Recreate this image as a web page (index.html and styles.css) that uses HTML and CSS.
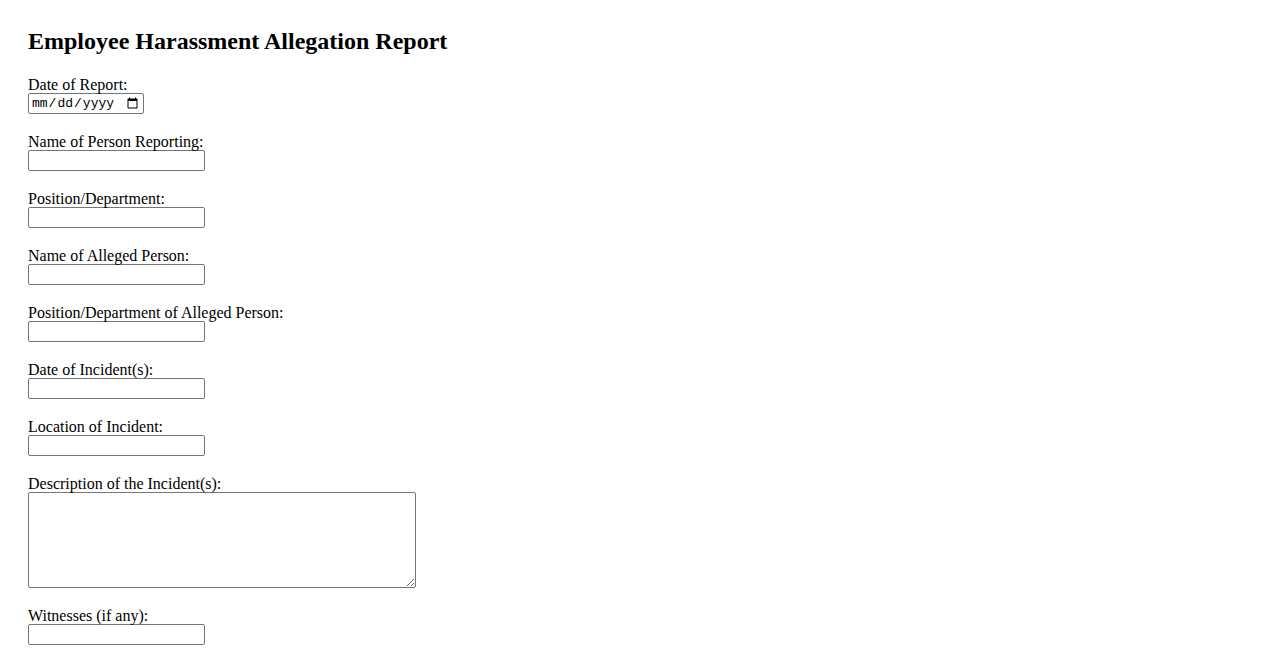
FILE: index.html
```html
<!DOCTYPE html>
<html lang="en">
<head>
<meta charset="utf-8">
<title>Employee Harassment Allegation Report</title>
<link rel="stylesheet" href="styles.css">
</head>
<body>
<h2 class="title">Employee Harassment Allegation Report</h2>
<form class="report">
  <div class="group">
    <label class="lbl" for="d1">Date of Report:</label>
    <input class="field date" type="date" id="d1">
  </div>
  <div class="group">
    <label class="lbl" for="f1">Name of Person Reporting:</label>
    <input class="field text" type="text" id="f1">
  </div>
  <div class="group">
    <label class="lbl" for="f2">Position/Department:</label>
    <input class="field text" type="text" id="f2">
  </div>
  <div class="group">
    <label class="lbl" for="f3">Name of Alleged Person:</label>
    <input class="field text" type="text" id="f3">
  </div>
  <div class="group">
    <label class="lbl" for="f4">Position/Department of Alleged Person:</label>
    <input class="field text" type="text" id="f4">
  </div>
  <div class="group">
    <label class="lbl" for="f5">Date of Incident(s):</label>
    <input class="field text" type="text" id="f5">
  </div>
  <div class="group">
    <label class="lbl" for="f6">Location of Incident:</label>
    <input class="field text" type="text" id="f6">
  </div>
  <div class="group">
    <label class="lbl" for="f7">Description of the Incident(s):</label>
    <textarea class="field area" id="f7"></textarea>
  </div>
  <div class="group">
    <label class="lbl" for="f8">Witnesses (if any):</label>
    <input class="field text" type="text" id="f8">
  </div>
</form>
</body>
</html>
```
FILE: styles.css
```css
body {
  margin: 0;
  padding: 28px;
  font-family: "Liberation Serif", "Times New Roman", serif;
  font-size: 16px;
  color: #000;
  background: #fff;
}
.title {
  margin: 0 0 20.5px;
  font-size: 24px;
  font-weight: bold;
}
.report {
  margin: 0;
}
.group {
  margin-bottom: 19px;
}
.lbl {
  display: block;
  line-height: 17px;
}
.field {
  display: block;
  box-sizing: border-box;
  border: 1px solid #767676;
  border-radius: 2px;
  margin: 0;
  font-family: "Liberation Sans", Arial, sans-serif;
  font-size: 13.33px;
  background: #fff;
}
.text {
  width: 177px;
  height: 21px;
  padding: 1px 2px;
}
.date {
  width: 116px;
  height: 21px;
  padding: 1px 2px;
  font-family: "Liberation Mono", "Courier New", monospace;
  font-size: 13px;
}
.area {
  width: 388px;
  height: 96px;
  padding: 2px;
  font-family: "Liberation Mono", monospace;
  resize: both;
}
```
